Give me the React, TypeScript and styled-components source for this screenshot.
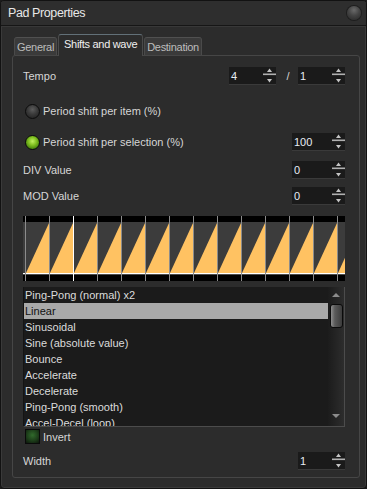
import React from 'react';
import styled, { createGlobalStyle } from 'styled-components';

const Global = createGlobalStyle`
  html, body { margin: 0; padding: 0; background: #1c1c1c; }
  body { font-family: "Liberation Sans", Arial, sans-serif; }
  * { box-sizing: border-box; }
`;

const Window = styled.div`
  width: 367px;
  height: 489px;
  background: #2c2c2c;
  border: 1px solid #121212;
  border-radius: 4px;
  box-shadow: inset 0 0 0 1px #3a3a3a;
  display: flex;
  flex-direction: column;
  overflow: hidden;
  color: #d8d8d8;
  font-size: 11px;
`;

const TitleBar = styled.div`
  height: 25px;
  flex: none;
  display: flex;
  align-items: center;
  justify-content: space-between;
  padding: 0 5px 1px 7px;
  background: #2e2e2e;
  border-bottom: 1px solid #161616;
  box-shadow: 0 1px 0 #383838;
`;

const Title = styled.span`
  font-size: 12.5px;
  letter-spacing: -0.4px;
  color: #e8e8e8;
`;

const Knob = styled.span`
  width: 14px;
  height: 14px;
  border-radius: 50%;
  background: radial-gradient(circle at 50% 30%, #6a6a6a 0%, #444 45%, #262626 100%);
  box-shadow: 0 0 0 1px #1e1e1e;
`;

const Body = styled.div`
  flex: 1;
  display: flex;
  flex-direction: column;
  padding: 8px 6px 0 11px;
`;

const TabBar = styled.div`
  display: flex;
  align-items: flex-end;
  height: 22px;
  margin-bottom: -1px;
  padding-left: 2px;
  position: relative;
  z-index: 1;
`;

const Tab = styled.div<{ $active?: boolean }>`
  height: ${(p) => (p.$active ? 22 : 18)}px;
  margin-bottom: ${(p) => (p.$active ? 0 : 1)}px;
  margin-right: 1px;
  padding: ${(p) => (p.$active ? '0 5px 3px' : '0 2px')};
  display: flex;
  align-items: center;
  border: 1px solid #4a4a4a;
  border-top-color: ${(p) => (p.$active ? '#627078' : '#505050')};
  border-bottom: none;
  border-radius: 3px 3px 0 0;
  background: ${(p) => (p.$active ? '#2c2c2c' : '#3a3a3a')};
  color: ${(p) => (p.$active ? '#f0f0f0' : '#bdbdbd')};
  font-size: 11px;
  letter-spacing: -0.3px;
`;

const Panel = styled.div`
  border: 1px solid #464646;
  border-radius: 3px;
  padding: 11px 14px 7px 10px;
  display: flex;
  flex-direction: column;
`;

const Row = styled.div<{ $mt?: number; $h?: number }>`
  display: flex;
  align-items: center;
  margin-top: ${(p) => p.$mt ?? 0}px;
  height: ${(p) => p.$h ?? 18}px;
`;

const Label = styled.span`
  color: #d6d6d6;
`;

const RightGroup = styled.div`
  margin-left: auto;
  display: flex;
  align-items: center;
`;

const Slash = styled.span`
  width: 22px;
  text-align: center;
  color: #d6d6d6;
  padding-left: 2px;
`;

const SpinBox = styled.div<{ $w: number }>`
  width: ${(p) => p.$w}px;
  height: 18px;
  background: #1a1a1a;
  border-bottom: 1px solid #3a3a3a;
  display: flex;
  align-items: center;
  justify-content: space-between;
  padding-left: 2px;
  color: #e6ecf4;
  font-size: 11px;
`;

const Arrows = styled.svg`
  width: 13px;
  height: 18px;
  flex: none;
  align-self: flex-start;
`;

const Spin = ({ w, value }: { w: number; value: string }) => (
  <SpinBox $w={w}>
    <span>{value}</span>
    <Arrows viewBox="0 0 13 18">
      <polygon points="4,5 6.5,1.5 9,5" fill="#c4c4c4" />
      <rect x="0" y="6.5" width="13" height="1.6" fill="#b0b0b0" />
      <polygon points="4,12 9,12 6.5,15.5" fill="#c4c4c4" />
    </Arrows>
  </SpinBox>
);

const Radio = styled.span<{ $on?: boolean }>`
  width: 15px;
  height: 15px;
  flex: none;
  border-radius: 50%;
  margin: 0 3px 0 2px;
  border: 1px solid #0b0b0b;
  background: ${(p) =>
    p.$on
      ? 'radial-gradient(circle at 50% 40%, #c0f060 0%, #80c020 40%, #3f7a0c 80%, #24420a 100%)'
      : 'radial-gradient(circle at 50% 35%, #5c5c5c 0%, #3a3a3a 45%, #1c1c1c 100%)'};
`;

const Check = styled.span`
  width: 15px;
  height: 15px;
  flex: none;
  margin: 0 3px 0 2px;
  border: 1px solid #0a0a0a;
  background: radial-gradient(circle at 50% 40%, #316a2c 0%, #1d3e1a 55%, #0c150b 100%);
`;

const ChartSvg = styled.svg`
  display: block;
  margin-top: 11px;
  width: 322px;
  height: 65px;
`;

const WaveChart = () => {
  const W = 322;
  const lines = Array.from({ length: 14 }, (_, k) => 2 + 24 * k);
  return (
    <ChartSvg viewBox="0 0 322 65">
      <rect width={W} height={65} fill="#000" />
      <rect y={6} width={W} height={51} fill="#3c3c3c" />
      {lines.map((x) => {
        const x0 = x + 1;
        const x1 = Math.min(x + 24, W);
        const h = (50 * (x1 - x0)) / 23;
        return <polygon key={x} points={`${x0},57 ${x1},${57 - h} ${x1},57`} fill="#ffc262" />;
      })}
      <rect y={57} width={W} height={1.3} fill="#fff" />
      {lines.map((x, i) => (
        <rect key={'l' + x} x={x} width={1} height={65} fill={i === 2 ? '#fff' : '#8c8c8c'} />
      ))}
    </ChartSvg>
  );
};

const List = styled.div`
  margin-top: 6px;
  height: 140px;
  display: flex;
  background: #1b1b1b;
  border-left: 1px solid #141414;
  border-right: 1px solid #4c4c4c;
  border-bottom: 1px solid #4c4c4c;
  overflow: hidden;
`;

const Items = styled.div`
  flex: 1;
  display: flex;
  flex-direction: column;
  overflow: hidden;
`;

const Item = styled.div<{ $sel?: boolean }>`
  height: 16px;
  flex: none;
  line-height: 16px;
  padding-left: 1px;
  white-space: nowrap;
  background: ${(p) => (p.$sel ? '#a9a9a9' : 'transparent')};
  color: ${(p) => (p.$sel ? '#111' : '#dcdcdc')};
`;

const ScrollBar = styled.div`
  width: 16px;
  flex: none;
  display: flex;
  flex-direction: column;
  align-items: center;
  padding: 6px 0 8px;
  background: linear-gradient(to right, #1c1c1c, #2d2d2d);
`;

const ScrollArrow = styled.span<{ $down?: boolean }>`
  width: 0;
  height: 0;
  border-left: 4px solid transparent;
  border-right: 4px solid transparent;
  ${(p) => (p.$down ? 'border-top: 4px solid #8c8c8c;' : 'border-bottom: 4px solid #8c8c8c;')}
`;

const Handle = styled.span`
  width: 13px;
  height: 24px;
  margin-top: 7px;
  margin-left: 1px;
  border: 1px solid #0a0a0a;
  border-radius: 3px;
  background: linear-gradient(to right, #8e8e8e, #5a5a5a 35%, #3c3c3c);
`;

const Spacer = styled.span`
  flex: 1;
`;

const waveItems = [
  'Ping-Pong (normal) x2',
  'Linear',
  'Sinusoidal',
  'Sine (absolute value)',
  'Bounce',
  'Accelerate',
  'Decelerate',
  'Ping-Pong (smooth)',
  'Accel-Decel (loop)',
];

export default function App() {
  return (
    <>
      <Global />
      <Window>
        <TitleBar>
          <Title>Pad Properties</Title>
          <Knob />
        </TitleBar>
        <Body>
          <TabBar>
            <Tab>General</Tab>
            <Tab $active>Shifts and wave</Tab>
            <Tab>Destination</Tab>
          </TabBar>
          <Panel>
            <Row>
              <Label>Tempo</Label>
              <RightGroup>
                <Spin w={47} value="4" />
                <Slash>/</Slash>
                <Spin w={47} value="1" />
              </RightGroup>
            </Row>
            <Row $mt={17}>
              <Radio />
              <Label>Period shift per item (%)</Label>
            </Row>
            <Row $mt={13}>
              <Radio $on />
              <Label>Period shift per selection (%)</Label>
              <RightGroup>
                <Spin w={53} value="100" />
              </RightGroup>
            </Row>
            <Row $mt={10}>
              <Label>DIV Value</Label>
              <RightGroup>
                <Spin w={53} value="0" />
              </RightGroup>
            </Row>
            <Row $mt={8}>
              <Label>MOD Value</Label>
              <RightGroup>
                <Spin w={53} value="0" />
              </RightGroup>
            </Row>
            <WaveChart />
            <List>
              <Items>
                {waveItems.map((t) => (
                  <Item key={t} $sel={t === 'Linear'}>
                    {t}
                  </Item>
                ))}
              </Items>
              <ScrollBar>
                <ScrollArrow />
                <Handle />
                <Spacer />
                <ScrollArrow $down />
              </ScrollBar>
            </List>
            <Row $mt={1} $h={17}>
              <Check />
              <Label>Invert</Label>
            </Row>
            <Row $mt={7}>
              <Label>Width</Label>
              <RightGroup>
                <Spin w={47} value="1" />
              </RightGroup>
            </Row>
          </Panel>
        </Body>
      </Window>
    </>
  );
}
